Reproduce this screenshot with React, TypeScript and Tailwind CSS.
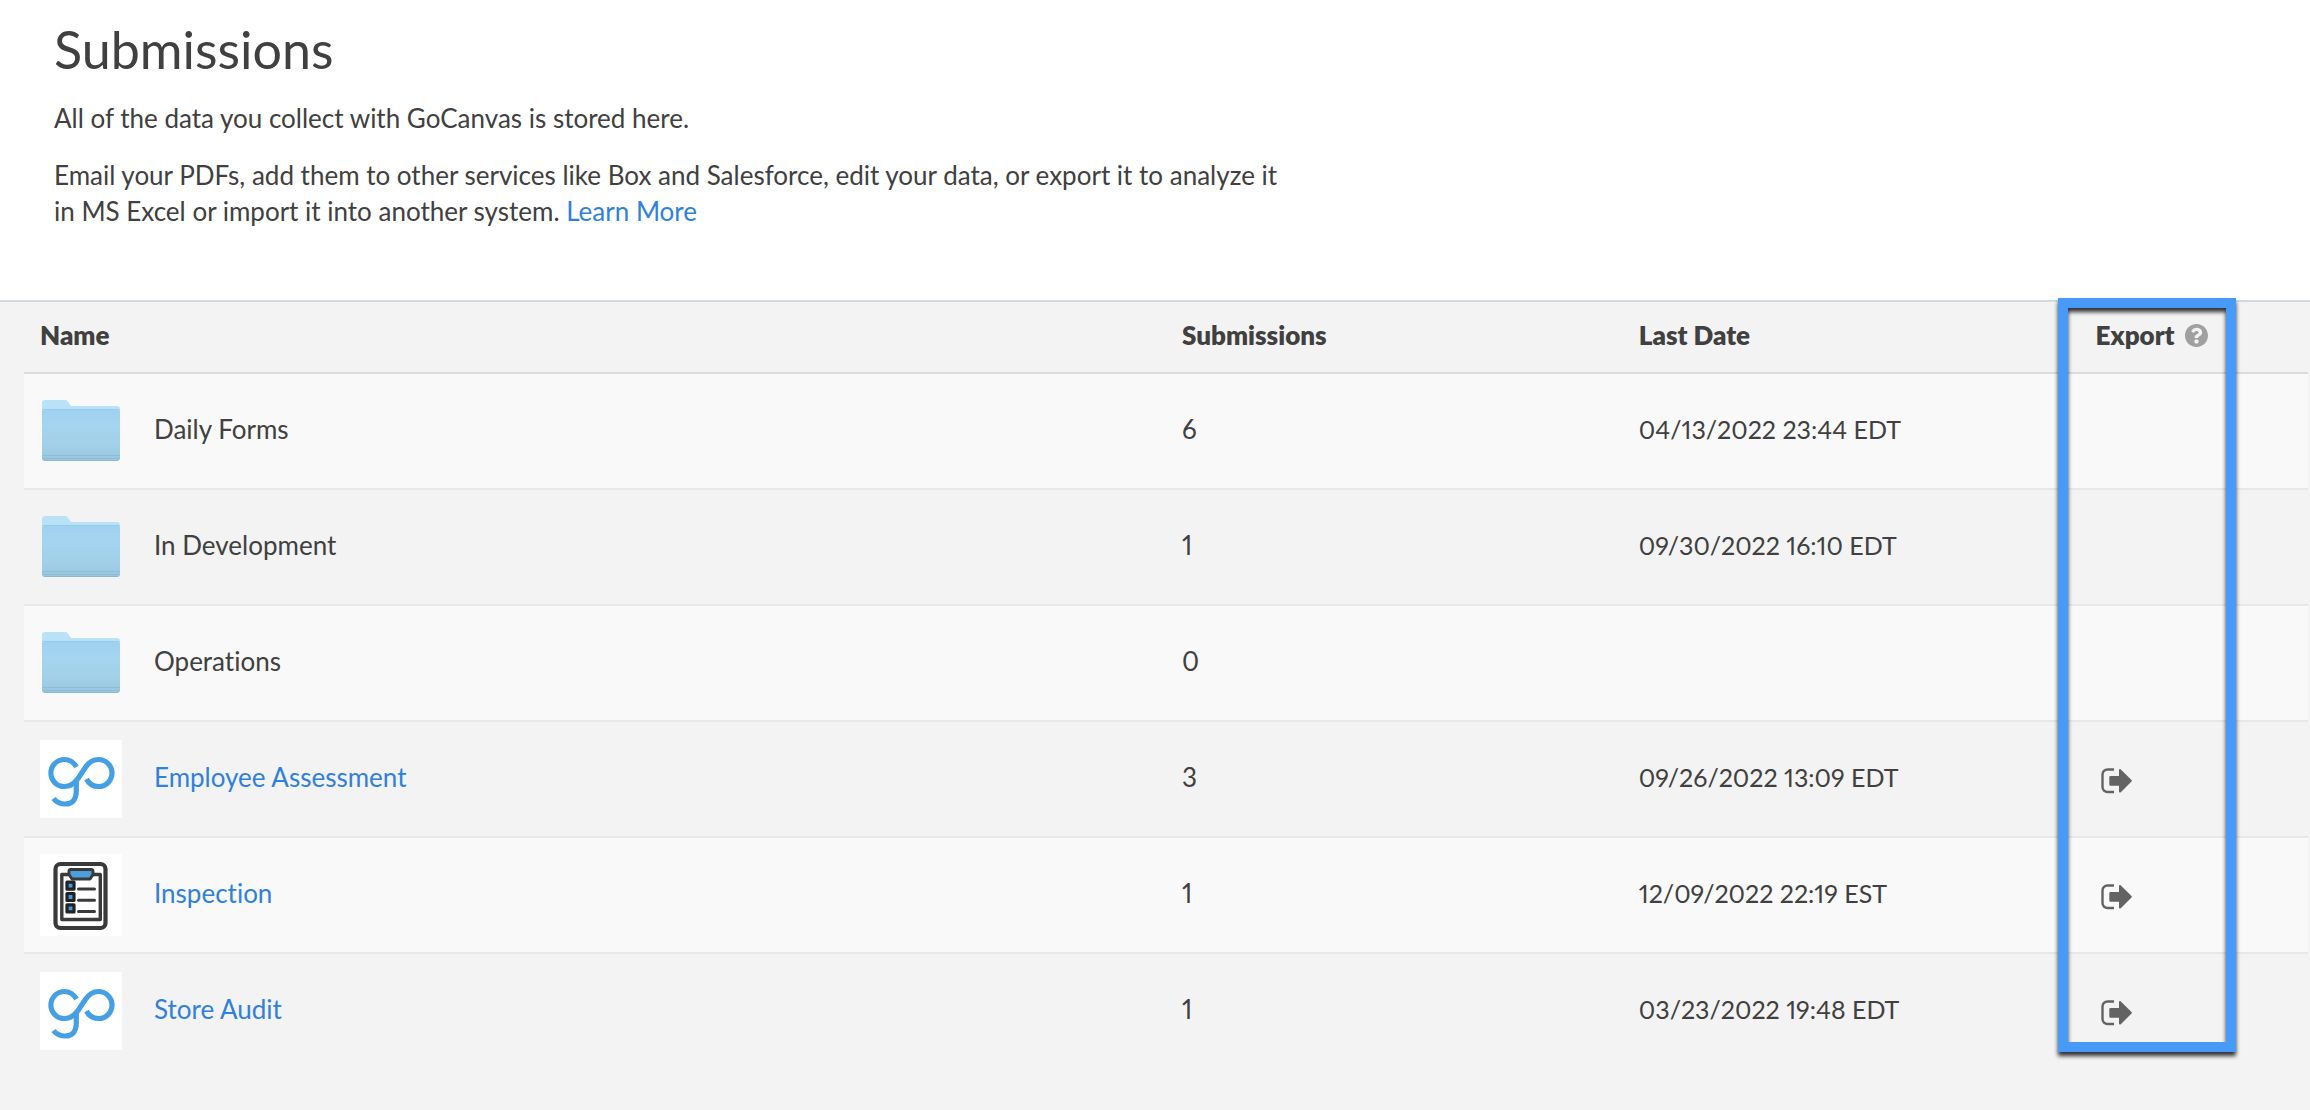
import React from "react";

type Kind = "folder" | "go" | "clipboard";

interface Entry {
  name: string;
  kind: Kind;
  count: number;
  date: string;
}

const entries: Entry[] = [
  { name: "Daily Forms", kind: "folder", count: 6, date: "04/13/2022 23:44 EDT" },
  { name: "In Development", kind: "folder", count: 1, date: "09/30/2022 16:10 EDT" },
  { name: "Operations", kind: "folder", count: 0, date: "" },
  { name: "Employee Assessment", kind: "go", count: 3, date: "09/26/2022 13:09 EDT" },
  { name: "Inspection", kind: "clipboard", count: 1, date: "12/09/2022 22:19 EST" },
  { name: "Store Audit", kind: "go", count: 1, date: "03/23/2022 19:48 EDT" },
];

function FolderIcon() {
  return (
    <svg width="82" height="62" viewBox="0 5 82 62" aria-hidden="true">
      <defs>
        <linearGradient id="folder-front" x1="0" y1="0" x2="0" y2="1">
          <stop offset="0" stopColor="#9fd1f1" />
          <stop offset="0.3" stopColor="#a4d4ef" />
          <stop offset="0.7" stopColor="#a1d0e8" />
          <stop offset="1" stopColor="#98c6e0" />
        </linearGradient>
      </defs>
      <path
        d="M2 8a3 3 0 0 1 3-3h20c1.500 0 2.200.6 3 1.700L31 11h46a3 3 0 0 1 3 3v20H2z"
        fill="#b9e2f8"
      />
      <path
        d="M2 17a3 3 0 0 1 3-3h72a3 3 0 0 1 3 3v46a3 3 0 0 1-3 3H5a3 3 0 0 1-3-3z"
        fill="url(#folder-front)"
      />
      <path d="M3 14.500h76" stroke="#97cbe9" strokeWidth="1" />
      <path d="M2 60.500h78M2 63.500h78" stroke="#8fbcd7" strokeWidth="1" />
      <path d="M4 65.500h74" stroke="#8ab7d2" strokeWidth="1" />
    </svg>
  );
}

function GoIcon() {
  return (
    <svg width="82" height="78" viewBox="0 0 82 78" aria-hidden="true">
      <rect width="82" height="78" fill="#fff" />
      <g fill="none" stroke="#459fe3" strokeWidth="5.200" strokeLinecap="butt">
        <path d="M36.500 27C33.500 22 29.500 19.500 24.500 19.500C16.800 19.500 10.900 25.600 10.900 33C10.900 40.500 16.800 46.500 24.500 46.500C31 46.500 34.500 43.500 38 38.500L45 28C48.500 22.500 52 19.500 58.500 19.500C66 19.500 72 25.600 72 33C72 40.500 66 46.500 58.500 46.500C53 46.500 49 44 46.500 39" />
        <path d="M36.300 40V51C36.300 59 32.500 64 25.500 64C20.500 64 16.500 62.500 13.500 58.500" />
      </g>
    </svg>
  );
}

function ClipboardIcon() {
  return (
    <svg width="82" height="82" viewBox="0 0 82 82" aria-hidden="true">
      <rect width="82" height="82" fill="#fff" />
      <g fill="none" stroke="#3a3a3a" strokeLinejoin="round" strokeLinecap="round">
        <rect x="15.500" y="10" width="50" height="64" rx="5" strokeWidth="4.200" />
        <rect x="21.800" y="20.500" width="38.500" height="45" strokeWidth="3.400" />
        <path
          d="M31 15.500h20.500a1.500 1.500 0 0 1 1.500 1.500v3.500l-3 4.500H32l-3-4.500v-3.500a1.500 1.500 0 0 1 2-1.500z"
          fill="#4a9fdc"
          strokeWidth="3"
        />
        <path d="M38.500 35h16M38.500 46.300h16M38.500 57.600h16" strokeWidth="3" />
        <g fill="#3f9be0" strokeWidth="3.200" stroke="#222">
          <rect x="27" y="28.200" width="7" height="7" />
          <rect x="27" y="39.500" width="7" height="7" />
          <rect x="27" y="50.900" width="7" height="7" />
        </g>
      </g>
    </svg>
  );
}

function ExportIcon() {
  return (
    <svg width="32" height="26" viewBox="0 0 32 26" aria-hidden="true">
      <path d="M13 1.500H6.500a5 5 0 0 0-5 5v12.500a5 5 0 0 0 5 5H13" fill="none" stroke="#636363" strokeWidth="2.400" />
      <path
        d="M9.500 8H18V2.200c0-1 1-1.500 1.800-.8L30.500 12c.5.500.5 1 0 1.500L19.800 24.200c-.8.700-1.800.2-1.800-.8V17.800H9.500a1.200 1.200 0 0 1-1.200-1.200V9.200A1.200 1.200 0 0 1 9.500 8z"
        fill="#636363"
      />
    </svg>
  );
}

function HelpIcon() {
  return (
    <svg width="23" height="23" viewBox="8 8 496 496" aria-hidden="true">
      <path
        fill="#a0a0a0"
        d="M504 256c0 136.997-111.043 248-248 248S8 392.997 8 256C8 119.083 119.043 8 256 8s248 111.083 248 248zM262.655 90c-54.497 0-89.255 22.957-116.549 63.758-3.536 5.286-2.353 12.415 2.715 16.258l34.699 26.310c5.205 3.947 12.621 3.008 16.665-2.122 17.864-22.658 30.113-35.797 57.303-35.797 20.429 0 45.698 13.148 45.698 32.958 0 14.976-12.363 22.667-32.534 33.976C247.128 238.528 216 254.941 216 296v4c0 6.627 5.373 12 12 12h56c6.627 0 12-5.373 12-12v-1.333c0-28.462 83.186-29.647 83.186-106.667 0-58.002-60.165-102-116.531-102zM256 338c-25.365 0-46 20.635-46 46 0 25.364 20.635 46 46 46s46-20.636 46-46c0-25.365-20.635-46-46-46z"
      />
    </svg>
  );
}

function EntryIcon({ kind }: { kind: Kind }) {
  if (kind === "folder") return <FolderIcon />;
  if (kind === "go") return <GoIcon />;
  return <ClipboardIcon />;
}

export default function App() {
  return (
    <div className="flex min-h-screen flex-col bg-white font-['Lato',sans-serif] text-[26px] leading-9 text-[#404040] proportional-nums [font-variant-ligatures:none]">
      <header className="px-[54px] pt-4 pb-[71px]">
        <h1 className="text-[52px] leading-[66px] font-normal">Submissions</h1>
        <div className="mt-[18px] flex max-w-[1270px] flex-col gap-[21px]">
          <p>All of the data you collect with GoCanvas is stored here.</p>
          <p>
            Email your PDFs, add them to other services like Box and Salesforce, edit your data, or export it to analyze it
            <br />
            in MS Excel or import it into another system.{" "}
            <a href="#learn-more" className="text-[#3080dd]">
              Learn More
            </a>
          </p>
        </div>
      </header>

      <main className="flex-1 border-t-2 border-[#d3d9dc] bg-[#f3f3f3] pr-0.5 pl-6">
        <div className="relative">
          <table className="w-full table-fixed border-separate border-spacing-0 text-left">
            <colgroup>
              <col className="w-1/2" />
              <col className="w-1/5" />
              <col className="w-1/5" />
              <col className="w-1/10" />
            </colgroup>
            <thead>
              <tr className="h-[72px] *:border-b-2 *:border-[#dadcdd] *:px-4 *:pb-1 *:font-extrabold">
                <th>Name</th>
                <th>Submissions</th>
                <th>Last Date</th>
                <th>
                  <span className="flex items-center gap-2.5">
                    Export
                    <button type="button" aria-label="About exporting">
                      <HelpIcon />
                    </button>
                  </span>
                </th>
              </tr>
            </thead>
            <tbody>
              {entries.map((entry) => (
                <tr
                  key={entry.name}
                  className="h-[116px] odd:bg-[#f9f9f9] *:border-b-2 *:border-[#e6e8ea] last:*:border-transparent"
                >
                  <td className="px-4">
                    <div className="flex items-center gap-8">
                      <EntryIcon kind={entry.kind} />
                      {entry.kind === "folder" ? (
                        <span className="pb-1">{entry.name}</span>
                      ) : (
                        <a href="#form" className="pb-1 text-[#3080dd]">
                          {entry.name}
                        </a>
                      )}
                    </div>
                  </td>
                  <td className="px-4 pb-1">{entry.count}</td>
                  <td className="px-4 pb-1 text-[25px]">{entry.date}</td>
                  <td className="px-4">
                    {entry.kind !== "folder" && (
                      <button type="button" aria-label={`Export ${entry.name}`} className="ml-[5px] flex pt-1">
                        <ExportIcon />
                      </button>
                    )}
                  </td>
                </tr>
              ))}
            </tbody>
          </table>
          <div className="pointer-events-none absolute -top-1 bottom-[18px] left-[90%] -ml-[22px] w-[178px] border-10 border-[#489af8] drop-shadow-[0_4px_2px_rgba(0,0,0,0.8)]" />
        </div>
      </main>
    </div>
  );
}
